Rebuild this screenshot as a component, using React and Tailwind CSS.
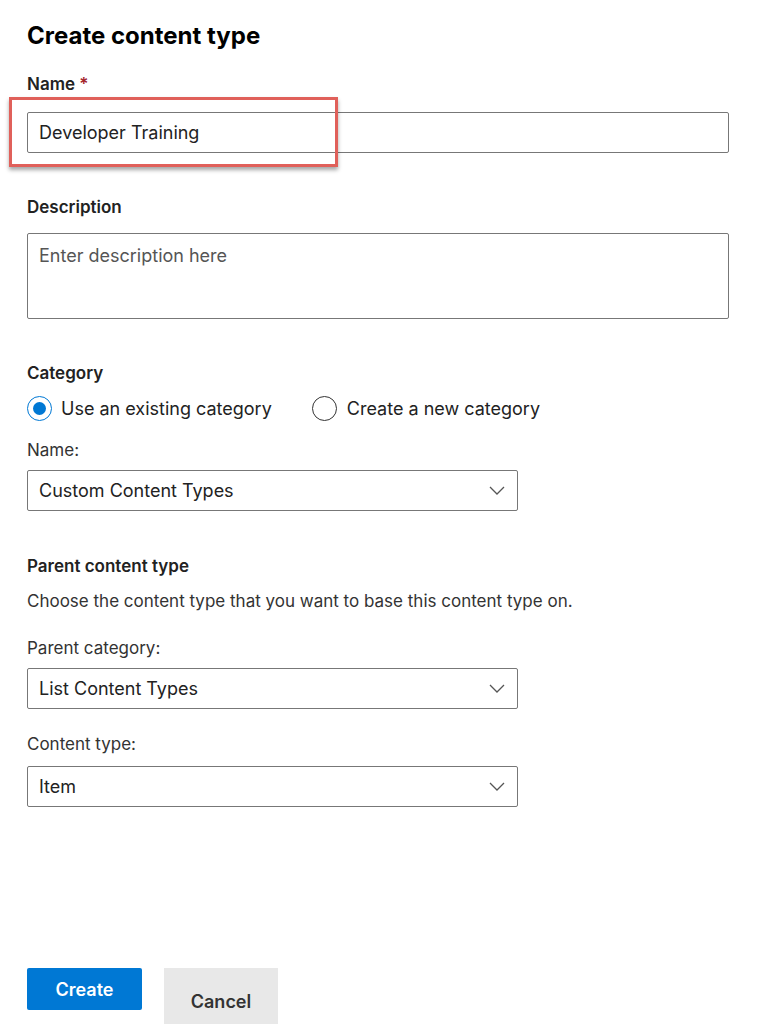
export default function App() {
  const Chev = () => (
    <svg width="16" height="10" viewBox="0 0 16 10" className="absolute right-[12px] top-[15px]">
      <path d="M1 1l7 7 7-7" fill="none" stroke="#555" strokeWidth="1.3" />
    </svg>
  );
  const Select = ({ v }) => (
    <div className="relative w-[491px] h-[41px] border border-[#777] rounded-[2px] flex items-center pl-[11px] text-[18px] text-[#222]">
      {v}
      <Chev />
    </div>
  );
  return (
    <div className="relative w-[759px] h-[1024px] bg-white overflow-hidden text-[#222]" style={{ fontFamily: "Inter, 'Open Sans', sans-serif" }}>
      <div className="pl-[27px] pr-[30px]">
        <div className="pt-[19px] h-[70px] text-[24px] font-bold text-black leading-[34px]">Create content type</div>
        <div className="h-[29px] text-[17px] font-semibold leading-[29px]">Name <span className="text-[#a4262c]">*</span></div>
        <div className="mt-[13px] h-[41px] border border-[#777] rounded-[2px] flex items-center pl-[11px] text-[18px]">Developer Training</div>
        <div className="mt-[40px] h-[29px] text-[17px] font-semibold leading-[29px]">Description</div>
        <div className="mt-[11px] h-[86px] border border-[#777] rounded-[2px] pl-[11px] pt-[8px] text-[18px] text-[#555]">Enter description here</div>
        <div className="mt-[40px] h-[29px] text-[17px] font-semibold leading-[29px]">Category</div>
        <div className="mt-[7px] flex items-center h-[26px] text-[18px]">
          <span className="w-[25px] h-[25px] rounded-full border-[1.5px] border-[#0078d4] flex items-center justify-center"><span className="w-[13px] h-[13px] rounded-full bg-[#0078d4]" /></span>
          <span className="ml-[9px]">Use an existing category</span>
          <span className="ml-[40px] w-[25px] h-[25px] rounded-full border-[1.5px] border-[#333]" />
          <span className="ml-[10px]">Create a new category</span>
        </div>
        <div className="mt-[16px] h-[26px] text-[17px] leading-[26px] text-[#333]">Name:</div>
        <div className="mt-[7px]"><Select v="Custom Content Types" /></div>
        <div className="mt-[41px] h-[28px] text-[17px] font-semibold leading-[28px]">Parent content type</div>
        <div className="mt-[8px] h-[26px] text-[17px] leading-[26px] text-[#333]">Choose the content type that you want to base this content type on.</div>
        <div className="mt-[21px] h-[26px] text-[17px] leading-[26px] text-[#333]">Parent category:</div>
        <div className="mt-[7px]"><Select v="List Content Types" /></div>
        <div className="mt-[22px] h-[26px] text-[17px] leading-[26px] text-[#333]">Content type:</div>
        <div className="mt-[9px]"><Select v="Item" /></div>
        <div className="mt-[161px] flex items-start">
          <div className="w-[115px] h-[42px] bg-[#0078d4] rounded-[2px] text-white text-[18px] font-semibold flex items-center justify-center">Create</div>
          <div className="ml-[22px] w-[114px] h-[60px] bg-[#e8e8e8] text-[18px] font-semibold text-[#333] flex items-start justify-center pt-[20px]">Cancel</div>
        </div>
      </div>
      <div className="absolute left-[9px] top-[97px] w-[329px] h-[70px] border-[3px] border-[#e0605a] shadow-[0_3px_4px_rgba(0,0,0,0.35)]" />
    </div>
  );
}
